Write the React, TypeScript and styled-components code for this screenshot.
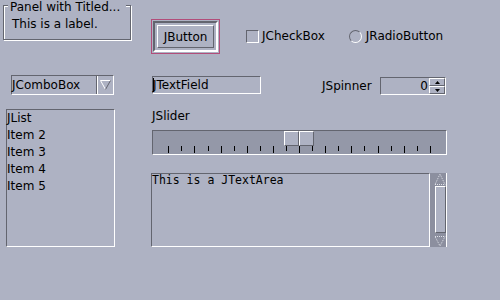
import React from "react";
import styled, { createGlobalStyle, css } from "styled-components";

const C = {
  bg: "#aeb2c3",
  shadow: "#63656f",
  hi: "#ffffff",
  focus: "#b24d7a",
  track: "#9498a8",
  sbTrack: "#8c8f9f",
  dots: "#dfe1e8",
};

const lowered = css`
  border: 1px solid;
  border-color: ${C.shadow} ${C.hi} ${C.hi} ${C.shadow};
`;
const raised = css`
  border: 1px solid;
  border-color: ${C.hi} ${C.shadow} ${C.shadow} ${C.hi};
`;

const GlobalStyle = createGlobalStyle`
  html, body { margin: 0; padding: 0; background: ${C.bg}; }
  * { box-sizing: border-box; }
`;

const Window = styled.div`
  width: 500px;
  height: 300px;
  overflow: hidden;
  background: ${C.bg};
  display: flex;
  flex-direction: column;
  font-family: "DejaVu Sans", Verdana, sans-serif;
  font-size: 12px;
  line-height: 14px;
  color: #000;
  white-space: nowrap;
`;

const Row = styled.div<{ $mt: number }>`
  display: flex;
  align-items: flex-start;
  margin-top: ${(p) => p.$mt}px;
`;

/* ---------- titled panel ---------- */
const TitledPanel = styled.div`
  position: relative;
  margin: 5px 0 0 3px;
  width: 128px;
  height: 35px;
  border: 1px solid ${C.shadow};
  box-shadow: inset 1px 1px 0 ${C.hi}, 1px 1px 0 ${C.hi};
  padding: 11px 0 0 8px;
`;
const PanelTitle = styled.span`
  position: absolute;
  top: -6px;
  left: 4px;
  padding: 0 6px 0 2px;
  background: ${C.bg};
`;

/* ---------- button ---------- */
const FocusRing = styled.div`
  margin: 19px 0 0 20px;
  border: 1px solid ${C.focus};
  padding: 1px;
  display: flex;
`;
const DefaultFrame = styled.div`
  border: 2px solid;
  border-color: ${C.shadow} ${C.hi} ${C.hi} ${C.shadow};
  padding: 2px;
  display: flex;
`;
const PushButton = styled.div`
  ${raised};
  width: 57px;
  height: 23px;
  display: flex;
  align-items: center;
  justify-content: center;
  background: ${C.bg};
`;

/* ---------- check / radio ---------- */
const Toggle = styled.div<{ $ml: number }>`
  display: flex;
  align-items: center;
  gap: 3px;
  height: 13px;
  line-height: 13px;
  margin: 30px 0 0 ${(p) => p.$ml}px;
`;
const CheckBox = styled.span`
  ${lowered};
  display: block;
  width: 13px;
  height: 13px;
`;
const RadioDot = styled.span`
  display: block;
  width: 13px;
  height: 13px;
  border-radius: 50%;
  border: 1px solid;
  border-color: ${C.shadow} ${C.hi} ${C.hi} ${C.shadow};
  margin-right: 1px;
`;

/* ---------- combo ---------- */
const Combo = styled.div`
  ${lowered};
  margin-left: 11px;
  width: 103px;
  height: 20px;
  display: flex;
`;
const ComboText = styled.div`
  flex: 1;
  display: flex;
  align-items: center;
`;
const ComboArrow = styled.div`
  width: 17px;
  border-left: 1px solid ${C.shadow};
  box-shadow: inset 1px 0 0 ${C.hi};
  display: flex;
  align-items: center;
  justify-content: center;
  padding-left: 1px;
`;

/* ---------- text field ---------- */
const TextField = styled.div`
  ${lowered};
  position: relative;
  margin: 1px 0 0 38px;
  width: 109px;
  height: 18px;
  display: flex;
  align-items: center;
`;
const Caret = styled.span`
  position: absolute;
  left: 0;
  top: 1px;
  bottom: 1px;
  width: 1px;
  background: #000;
`;

/* ---------- spinner ---------- */
const SpinnerGroup = styled.div`
  display: flex;
  align-items: center;
  gap: 8px;
  margin: 2px 0 0 61px;
`;
const SpinnerLabel = styled.span`
  width: 50px;
`;
const Spinner = styled.div`
  ${lowered};
  width: 66px;
  height: 18px;
  display: flex;
`;
const SpinValue = styled.div`
  flex: 1;
  display: flex;
  align-items: center;
  justify-content: flex-end;
  padding-right: 1px;
`;
const SpinButtons = styled.div`
  width: 16px;
  display: flex;
  flex-direction: column;
`;
const SpinButton = styled.div`
  ${raised};
  flex: 1;
  display: flex;
  align-items: center;
  justify-content: center;
`;

/* ---------- list ---------- */
const List = styled.div`
  ${lowered};
  margin-left: 6px;
  width: 109px;
  height: 138px;
  display: flex;
  flex-direction: column;
  line-height: 17px;
`;
const ListItem = styled.div`
  height: 17px;
`;

/* ---------- right column ---------- */
const RightColumn = styled.div`
  margin-left: 36px;
  width: 296px;
  display: flex;
  flex-direction: column;
`;
const SliderLabel = styled.div`
  padding-left: 1px;
  height: 14px;
`;
const SliderTrack = styled.div`
  ${lowered};
  position: relative;
  margin: 7px 0 0 1px;
  width: 295px;
  height: 25px;
  background: ${C.track};
  display: flex;
`;
const Thumb = styled.div`
  position: absolute;
  top: 0;
  left: 131px;
  display: flex;
`;
const ThumbHalf = styled.div`
  ${raised};
  width: 15px;
  height: 15px;
  background: ${C.bg};
`;

const ScrollPane = styled.div`
  display: flex;
  margin-top: 18px;
  height: 74px;
`;
const TextArea = styled.div`
  ${lowered};
  width: 279px;
  font-family: "DejaVu Sans Mono", "Liberation Mono", monospace;
  font-size: 11.5px;
  line-height: 13px;
  white-space: pre;
`;
const ScrollBar = styled.div`
  width: 17px;
  background: ${C.sbTrack};
  border-right: 1px solid ${C.hi};
  padding-left: 4px;
  display: flex;
  flex-direction: column;
`;
const ScrollArrow = styled.div`
  height: 12px;
  display: flex;
`;
const ScrollThumb = styled.div`
  ${raised};
  margin: 1px 0 0 1px;
  width: 11px;
  height: 47px;
  background: ${C.bg};
`;
const ScrollSpacer = styled.div`
  flex: 1;
`;

const TICKS = [15, 28, 41, 55, 68, 81, 94, 107, 120, 133, 146, 159, 172, 185, 198, 211, 225, 238, 251, 264, 277];

export default function App() {
  return (
    <Window>
      <GlobalStyle />
      <Row $mt={0}>
        <TitledPanel>
          <PanelTitle>Panel with Titled...</PanelTitle>
          This is a label.
        </TitledPanel>
        <FocusRing>
          <DefaultFrame>
            <PushButton>JButton</PushButton>
          </DefaultFrame>
        </FocusRing>
        <Toggle $ml={26}>
          <CheckBox />
          <span>JCheckBox</span>
        </Toggle>
        <Toggle $ml={24}>
          <RadioDot />
          <span>JRadioButton</span>
        </Toggle>
      </Row>

      <Row $mt={21}>
        <Combo>
          <ComboText>JComboBox</ComboText>
          <ComboArrow>
            <svg width="11" height="10" viewBox="0 0 11 10">
              <polygon points="0.5,0.5 10.5,0.5 5.5,9.5" fill={C.bg} />
              <line x1="0.5" y1="0.5" x2="10.5" y2="0.5" stroke={C.hi} />
              <line x1="0.5" y1="0.5" x2="5.5" y2="9.5" stroke={C.hi} />
              <line x1="10.5" y1="0.5" x2="5.5" y2="9.5" stroke={C.shadow} />
            </svg>
          </ComboArrow>
        </Combo>
        <TextField>
          <Caret />
          JTextField
        </TextField>
        <SpinnerGroup>
          <SpinnerLabel>JSpinner</SpinnerLabel>
          <Spinner>
            <SpinValue>0</SpinValue>
            <SpinButtons>
              <SpinButton>
                <svg width="5" height="3" viewBox="0 0 5 3">
                  <polygon points="0,3 5,3 2.5,0" fill="#000" />
                </svg>
              </SpinButton>
              <SpinButton>
                <svg width="5" height="3" viewBox="0 0 5 3">
                  <polygon points="0,0 5,0 2.5,3" fill="#000" />
                </svg>
              </SpinButton>
            </SpinButtons>
          </Spinner>
        </SpinnerGroup>
      </Row>

      <Row $mt={14}>
        <List>
          <ListItem>JList</ListItem>
          <ListItem>Item 2</ListItem>
          <ListItem>Item 3</ListItem>
          <ListItem>Item 4</ListItem>
          <ListItem>Item 5</ListItem>
        </List>
        <RightColumn>
          <SliderLabel>JSlider</SliderLabel>
          <SliderTrack>
            <svg width="293" height="23" viewBox="0 0 293 23">
              {TICKS.map((x, i) => (
                <rect key={x} x={x} y={15} width={1} height={i % 2 === 0 ? 7 : 5} fill="#000" />
              ))}
            </svg>
            <Thumb>
              <ThumbHalf />
              <ThumbHalf />
            </Thumb>
          </SliderTrack>
          <ScrollPane>
            <TextArea>This is a JTextArea</TextArea>
            <ScrollBar>
              <ScrollArrow>
                <svg width="12" height="12" viewBox="0 0 12 12">
                  <polyline points="1,11.5 11,11.5 6,1 1,11.5" fill="none" stroke={C.dots} strokeDasharray="1 1" />
                </svg>
              </ScrollArrow>
              <ScrollThumb />
              <ScrollSpacer />
              <ScrollArrow>
                <svg width="12" height="12" viewBox="0 0 12 12">
                  <polyline points="1,1.5 11,1.5 6,11 1,1.5" fill="none" stroke={C.dots} strokeDasharray="1 1" />
                </svg>
              </ScrollArrow>
            </ScrollBar>
          </ScrollPane>
        </RightColumn>
      </Row>
    </Window>
  );
}
